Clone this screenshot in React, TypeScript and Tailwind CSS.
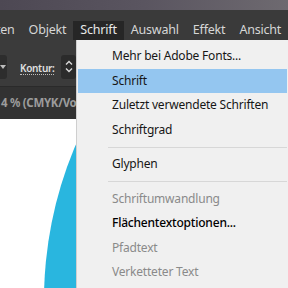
import React from 'react';

type Item = { label: string; kind?: 'active' | 'disabled' | 'strong' } | 'sep';

const MENU: Item[] = [
  { label: 'Mehr bei Adobe Fonts...' },
  { label: 'Schrift', kind: 'active' },
  { label: 'Zuletzt verwendete Schriften' },
  { label: 'Schriftgrad' },
  'sep',
  { label: 'Glyphen' },
  'sep',
  { label: 'Schriftumwandlung', kind: 'disabled' },
  { label: 'Flächentextoptionen...', kind: 'strong' },
  { label: 'Pfadtext', kind: 'disabled' },
  { label: 'Verketteter Text', kind: 'disabled' },
];

const BAR = ['Bearbeiten', 'Objekt', 'Schrift', 'Auswahl', 'Effekt', 'Ansicht'];

const font = { fontFamily: '"Segoe UI", "Noto Sans", sans-serif' };

const App: React.FC = () => {
  return (
    <div
      className="relative w-[288px] h-[288px] overflow-hidden bg-white"
      style={font}
    >
      {/* window title strip */}
      <div className="h-[10px] bg-gradient-to-r from-[#4d4853] via-[#5a5560] to-[#6e6a70]" />

      {/* menu bar */}
      <div className="h-[30px] bg-[#3a3a3a] flex items-end overflow-hidden">
        <div className="flex items-end ml-[-55px] text-[12.5px] tracking-[-0.2px] text-[#d6d6d6]">
          {BAR.map((name) => (
            <div
              key={name}
              className={`h-[19px] px-[7px] flex items-center whitespace-nowrap ${
                name === 'Schrift' ? 'bg-[#262626] text-[#e8e8e8]' : ''
              }`}
            >
              {name}
            </div>
          ))}
        </div>
      </div>

      {/* control bar */}
      <div className="h-[47px] bg-[#3b3b3b] flex items-center pt-[10px] border-b border-[#2a2a2a]">
        <div className="w-[7px] h-[24px] bg-[#2d2d2d] rounded-r-[3px] flex items-center justify-end pr-[1px] mt-[-3px]">
          <svg width="6" height="4" viewBox="0 0 6 4">
            <path d="M0 0 L6 0 L3 4 Z" fill="#bdbdbd" />
          </svg>
        </div>
        <span className="ml-[13px] text-[10px] font-semibold text-[#e0e0e0] border-b border-dotted border-[#bdbdbd] leading-[12px] tracking-[-0.3px]">
          Kontur:
        </span>
        <div className="ml-[7px] w-[15px] h-[24px] bg-[#2b2b2b] rounded-[3px] flex flex-col items-center justify-center gap-[3px] mt-[-3px]">
          <svg width="8" height="5" viewBox="0 0 8 5">
            <path d="M1 4.5 L4 1.5 L7 4.5" stroke="#d8d8d8" strokeWidth="1.4" fill="none" />
          </svg>
          <svg width="8" height="5" viewBox="0 0 8 5">
            <path d="M1 0.5 L4 3.5 L7 0.5" stroke="#d8d8d8" strokeWidth="1.4" fill="none" />
          </svg>
        </div>
      </div>

      {/* document tab */}
      <div className="h-[32px] bg-[#323232] flex items-center">
        <span className="text-[11.5px] font-bold text-[#9c9c9c] whitespace-nowrap ml-[1px] tracking-[-0.3px]">
          4 % (CMYK/Vorschau)
        </span>
      </div>

      {/* artboard */}
      <div className="relative h-[169px] bg-white">
        <svg className="absolute left-0 top-0" width="288" height="169" viewBox="0 119 288 169">
          <circle cx="439" cy="300" r="395" fill="#29b6df" />
        </svg>
      </div>

      {/* Schrift dropdown */}
      <div className="absolute left-[76px] top-[40px] right-0 bottom-0 bg-[#f0f0f0] border-l border-[#cfcfcf] pt-[4px] px-[1px] text-[12px] tracking-[-0.2px]">
        {MENU.map((it, i) =>
          it === 'sep' ? (
            <div key={i} className="h-[10px] flex items-center pl-[30px]">
              <div className="h-px w-full bg-[#d7d7d7]" />
            </div>
          ) : (
            <div
              key={i}
              className={`h-[24.5px] pl-[34px] flex items-center whitespace-nowrap ${
                it.kind === 'active' ? 'bg-[#94c6f0] text-[#101010]' : ''
              } ${
                it.kind === 'disabled'
                  ? 'text-[#8a8a8a]'
                  : it.kind === 'strong'
                  ? 'text-black font-medium'
                  : 'text-[#161616]'
              }`}
            >
              {it.label}
            </div>
          )
        )}
      </div>
    </div>
  );
};

export default App;
